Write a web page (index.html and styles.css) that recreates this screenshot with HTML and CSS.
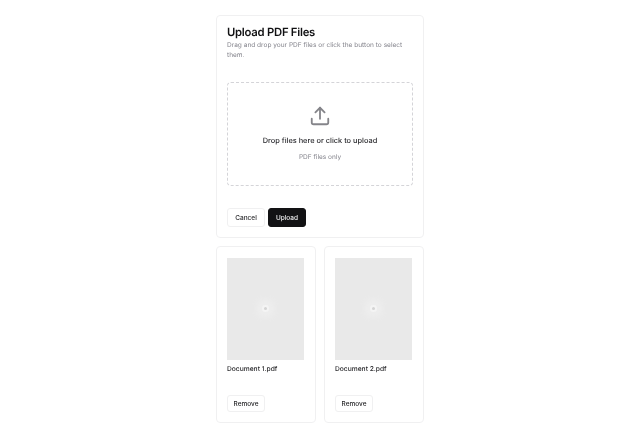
FILE: index.html
```html
<!DOCTYPE html>
<html lang="en">
<head>
    <meta charset="UTF-8">
    <meta name="viewport" content="width=device-width, initial-scale=1.0">
    <title>Upload PDF Files</title>
    <link rel="stylesheet" href="styles.css">
</head>
<body>

    <div class="page">
        <!-- Upload card -->
        <section class="card upload-card">
            <h1>Upload PDF Files</h1>
            <p class="subtitle">Drag and drop your PDF files or click the button to select them.</p>

            <div class="dropzone">
                <svg class="upload-icon" width="22" height="22" viewBox="0 0 24 24" fill="none" stroke="currentColor" stroke-width="2" stroke-linecap="round" stroke-linejoin="round">
                    <path d="M21 15v4a2 2 0 0 1-2 2H5a2 2 0 0 1-2-2v-4"/>
                    <polyline points="17 8 12 3 7 8"/>
                    <line x1="12" y1="3" x2="12" y2="15"/>
                </svg>
                <p class="drop-title">Drop files here or click to upload</p>
                <p class="drop-hint">PDF files only</p>
            </div>

            <div class="actions">
                <button class="btn">Cancel</button>
                <button class="btn btn-primary">Upload</button>
            </div>
        </section>

        <!-- Uploaded files -->
        <div class="file-grid">
            <section class="card file-card">
                <div class="preview"><span class="preview-dot"></span></div>
                <p class="file-name">Document 1.pdf</p>
                <button class="btn btn-small">Remove</button>
            </section>
            <section class="card file-card">
                <div class="preview"><span class="preview-dot"></span></div>
                <p class="file-name">Document 2.pdf</p>
                <button class="btn btn-small">Remove</button>
            </section>
        </div>
    </div>

</body>
</html>
```

FILE: styles.css
```css
* {
    margin: 0;
    padding: 0;
    box-sizing: border-box;
}

body {
    font-family: Inter, 'Liberation Sans', sans-serif;
    background-color: #ffffff;
    color: #18181b;
    text-rendering: geometricPrecision;
}

.page {
    width: 208px;
    margin: 15px auto 0;
    display: flex;
    flex-direction: column;
    gap: 8px;
    will-change: transform;
}

.card {
    background-color: #ffffff;
    border: 1px solid #f0f0f1;
    border-radius: 4px;
    padding: 11px 10px 10px;
}

h1 {
    font-size: 11.3px;
    line-height: 10px;
    letter-spacing: -0.25px;
    font-weight: 600;
    color: #111113;
}

.subtitle {
    font-size: 6.55px;
    line-height: 9.3px;
    margin-top: 4.35px;
    color: #85858d;
}

.dropzone {
    height: 104px;
    margin-top: 22px;
    border: 1px dashed #d4d4d8;
    border-radius: 4px;
    display: flex;
    flex-direction: column;
    align-items: center;
}

.upload-icon {
    margin-top: 22px;
    color: #85858a;
}

.drop-title {
    font-size: 7.4px;
    line-height: 12px;
    margin-top: 8px;
    font-weight: 500;
    color: #2a2a2e;
}

.drop-hint {
    font-size: 6.5px;
    line-height: 10px;
    margin-top: 5px;
    color: #85858d;
}

.actions {
    display: flex;
    gap: 3px;
    margin-top: 22px;
}

.btn {
    font-family: inherit;
    font-size: 6.5px;
    font-weight: 500;
    width: 38px;
    height: 19px;
    padding-top: 1px;
    color: #27272a;
    background-color: #ffffff;
    border: 1px solid #f0f0f1;
    border-radius: 3px;
}

.btn-primary {
    background-color: #121214;
    border-color: #121214;
    color: #f4f4f5;
}

.btn-small {
    height: 17px;
}

.file-grid {
    display: grid;
    grid-template-columns: 1fr 1fr;
    gap: 8px;
}

.file-card {
    height: 177px;
    padding-right: 11px;
    display: flex;
    flex-direction: column;
    align-items: flex-start;
}

.preview {
    width: 100%;
    height: 102px;
    background-color: #e9e9e9;
    display: flex;
    align-items: center;
    justify-content: center;
}

.preview-dot {
    width: 3px;
    height: 3px;
    border-radius: 50%;
    background-color: #d4d4d4;
    box-shadow: 0 0 0 2px #f4f4f4, 0 0 6px 7px #eeeeee;
}

.file-name {
    font-size: 6.7px;
    line-height: 10px;
    margin-top: 4px;
    font-weight: 500;
    color: #27272a;
}

.file-card .btn {
    margin-top: auto;
}
```
